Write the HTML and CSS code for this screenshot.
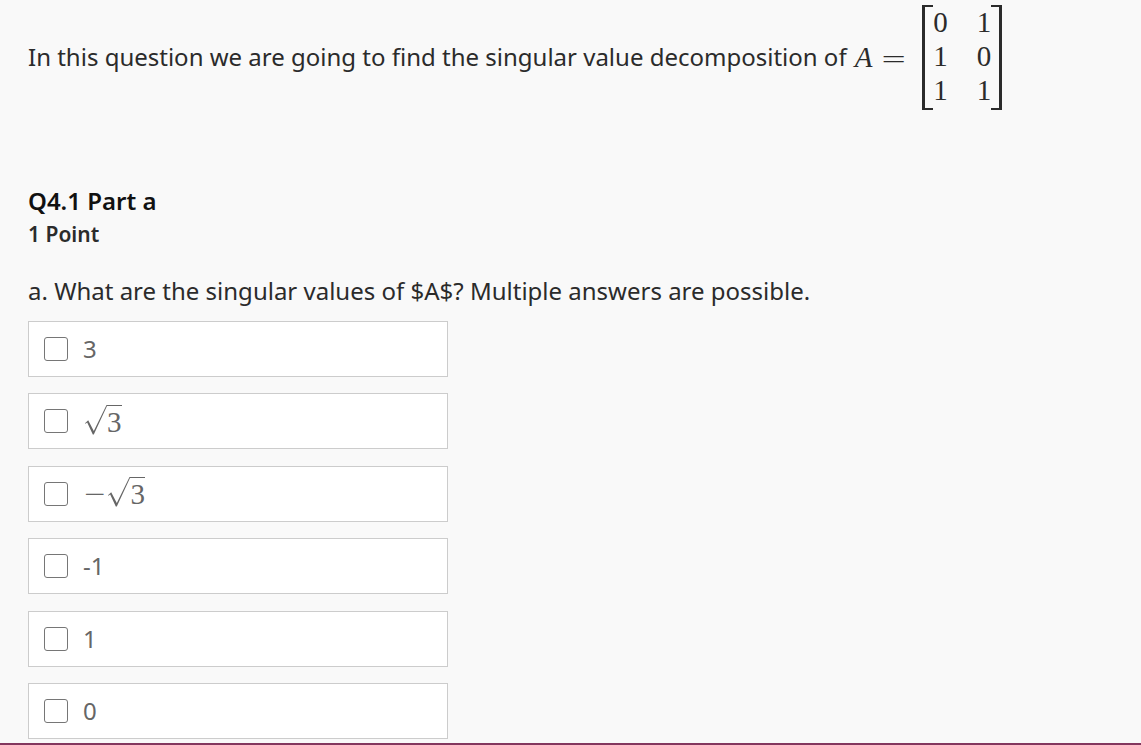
FILE: index.html
```html
<!DOCTYPE html>
<html lang="en">
<head>
    <meta charset="UTF-8">
    <meta name="viewport" content="width=device-width, initial-scale=1.0">
    <title>Q4 Singular Value Decomposition</title>
    <link rel="stylesheet" href="styles.css">
</head>
<body>
    <main class="question">
        <div class="intro">
            <p>In this question we are going to find the singular value decomposition of</p>
            <span class="math"><i>A</i></span>
            <span class="operator">=</span>
            <div class="matrix math">
                <span>0</span><span>1</span>
                <span>1</span><span>0</span>
                <span>1</span><span>1</span>
            </div>
        </div>

        <h2>Q4.1 Part a</h2>
        <h3>1 Point</h3>
        <p class="prompt" id="prompt">a. What are the singular values of $A$? Multiple answers are possible.</p>

        <div class="options" role="group" aria-labelledby="prompt">
            <label class="option"><input type="checkbox" name="answer"><span>3</span></label>
            <label class="option">
                <input type="checkbox" name="answer">
                <span class="math root">
                    <svg class="radical" width="24" height="33" viewBox="0 0 24 33" aria-hidden="true">
                        <path d="M2 18.2 L5.2 15.2 L10.8 26 L23.5 0 L24 0 L24 1 L10.8 29.5 L9.8 29.5 L4.2 17.4 L2.4 18.8 Z" fill="currentColor"/>
                    </svg><span class="radicand">3</span>
                </span>
            </label>
            <label class="option">
                <input type="checkbox" name="answer">
                <span class="math root">
                    <span class="operator">−</span>
                    <svg class="radical" width="24" height="33" viewBox="0 0 24 33" aria-hidden="true">
                        <path d="M2 18.2 L5.2 15.2 L10.8 26 L23.5 0 L24 0 L24 1 L10.8 29.5 L9.8 29.5 L4.2 17.4 L2.4 18.8 Z" fill="currentColor"/>
                    </svg><span class="radicand">3</span>
                </span>
            </label>
            <label class="option"><input type="checkbox" name="answer"><span>-1</span></label>
            <label class="option"><input type="checkbox" name="answer"><span>1</span></label>
            <label class="option"><input type="checkbox" name="answer"><span>0</span></label>
        </div>
    </main>
</body>
</html>
```

FILE: styles.css
```css
*,
*::before,
*::after {
    box-sizing: border-box;
}
body {
    margin: 0;
    background: #f9f9f9;
    color: #2b2b2b;
    font-family: "Noto Sans", sans-serif;
    font-size: 24px;
    line-height: 36px;
}
p, h2, h3 {
    margin: 0;
}
.question {
    display: flex;
    flex-direction: column;
    min-height: 100vh;
    padding: 5px 28px 4px;
    border-bottom: 2px solid #83375e;
}
.intro {
    display: flex;
    align-items: center;
    margin-bottom: 73px;
}
.intro p {
    padding-bottom: 2px;
}
.math {
    font-family: "Liberation Serif", serif;
    font-size: 29px;
}
.intro > .math {
    margin-left: 8px;
    padding-bottom: 2px;
}
.operator {
    font-family: "DejaVu Sans", sans-serif;
    font-weight: 200;
    font-size: 32px;
}
.intro > .operator {
    margin-left: 8px;
}
.intro > .matrix {
    display: grid;
    grid-template-columns: auto auto;
    column-gap: 29px;
    position: relative;
    margin-left: 15px;
    padding: 0 11px 3px;
    line-height: 34px;
}
.matrix::before,
.matrix::after {
    content: "";
    position: absolute;
    top: 0;
    bottom: 0;
    width: 11px;
    border: 2px solid;
}
.matrix::before {
    left: 0;
    border-left-width: 3px;
    border-right: none;
}
.matrix::after {
    right: 0;
    border-right-width: 3px;
    border-left: none;
}
h2 {
    color: #111;
    font-size: 24px;
    font-weight: 600;
    line-height: 36px;
}
h3 {
    font-size: 21px;
    font-weight: 600;
    line-height: 30px;
}
.prompt {
    margin: 24px 0 12px;
}
.options {
    flex: 1;
    display: flex;
    flex-direction: column;
    justify-content: space-between;
    width: 100%;
    max-width: 420px;
}
.option {
    display: flex;
    align-items: center;
    gap: 15px;
    height: 56px;
    padding: 0 15px;
    background: #fff;
    border: 1px solid #ccc;
    color: #666;
}
.option input {
    appearance: none;
    width: 24px;
    height: 24px;
    margin: 0;
    background: #fff;
    border: 1px solid #767676;
    border-radius: 3px;
}
.option input:checked {
    background: #666;
}
.root {
    display: flex;
    align-items: center;
}
.root .operator {
    font-size: 28px;
}
.radicand {
    border-top: 1px solid;
    line-height: 32px;
}
```
